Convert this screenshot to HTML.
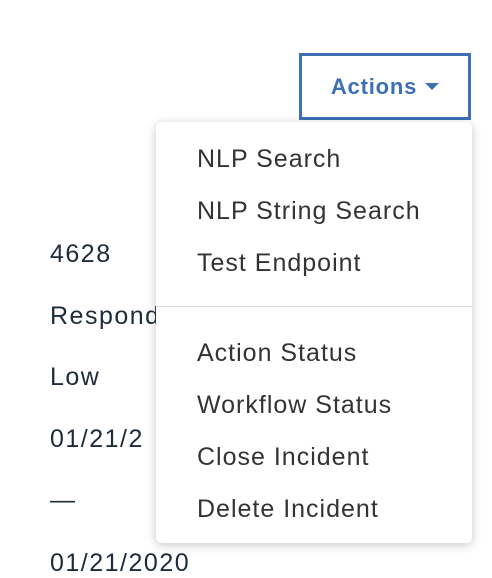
<!DOCTYPE html>
<html><head><style>
body{margin:0;width:492px;height:556px;background:#fff;position:relative;overflow:hidden;font-family:"Liberation Sans",sans-serif}
.l{position:absolute;left:50px;font-size:25px;letter-spacing:1.5px;color:#1d2b3a;line-height:30px}
.btn{position:absolute;left:299px;top:53px;width:166px;height:61px;border:3px solid #3d6fb3;color:#3d6fb3;font-weight:bold;font-size:22px;letter-spacing:0.8px;line-height:61px;text-align:center}
.btn span{display:inline-block;width:0;height:0;border-left:7px solid transparent;border-right:7px solid transparent;border-top:7px solid #3d6fb3;vertical-align:middle;margin-left:8px;margin-top:-3px}
.menu{position:absolute;z-index:2;left:156px;top:122px;width:316px;height:421px;background:#fff;border-radius:6px;box-shadow:0 2px 10px rgba(0,0,0,.22)}
.i{position:absolute;left:41px;font-size:25px;letter-spacing:1px;color:#333;line-height:30px;white-space:nowrap}
.hr{position:absolute;left:0;right:0;top:184px;height:1px;background:#ddd}
</style></head><body>
<div class="l" style="top:239px">4628</div>
<div class="l" style="top:301px">Respond</div>
<div class="l" style="top:362px">Low</div>
<div class="l" style="top:424px">01/21/2</div>
<div class="l" style="top:485px">—</div>
<div class="l" style="top:548px">01/21/2020</div>
<div class="btn">Actions<span></span></div>
<div class="menu">
<div class="i" style="top:22px">NLP Search</div>
<div class="i" style="top:74px">NLP String Search</div>
<div class="i" style="top:126px">Test Endpoint</div>
<div class="hr"></div>
<div class="i" style="top:216px">Action Status</div>
<div class="i" style="top:268px">Workflow Status</div>
<div class="i" style="top:320px">Close Incident</div>
<div class="i" style="top:372px">Delete Incident</div>
</div>
</body></html>
